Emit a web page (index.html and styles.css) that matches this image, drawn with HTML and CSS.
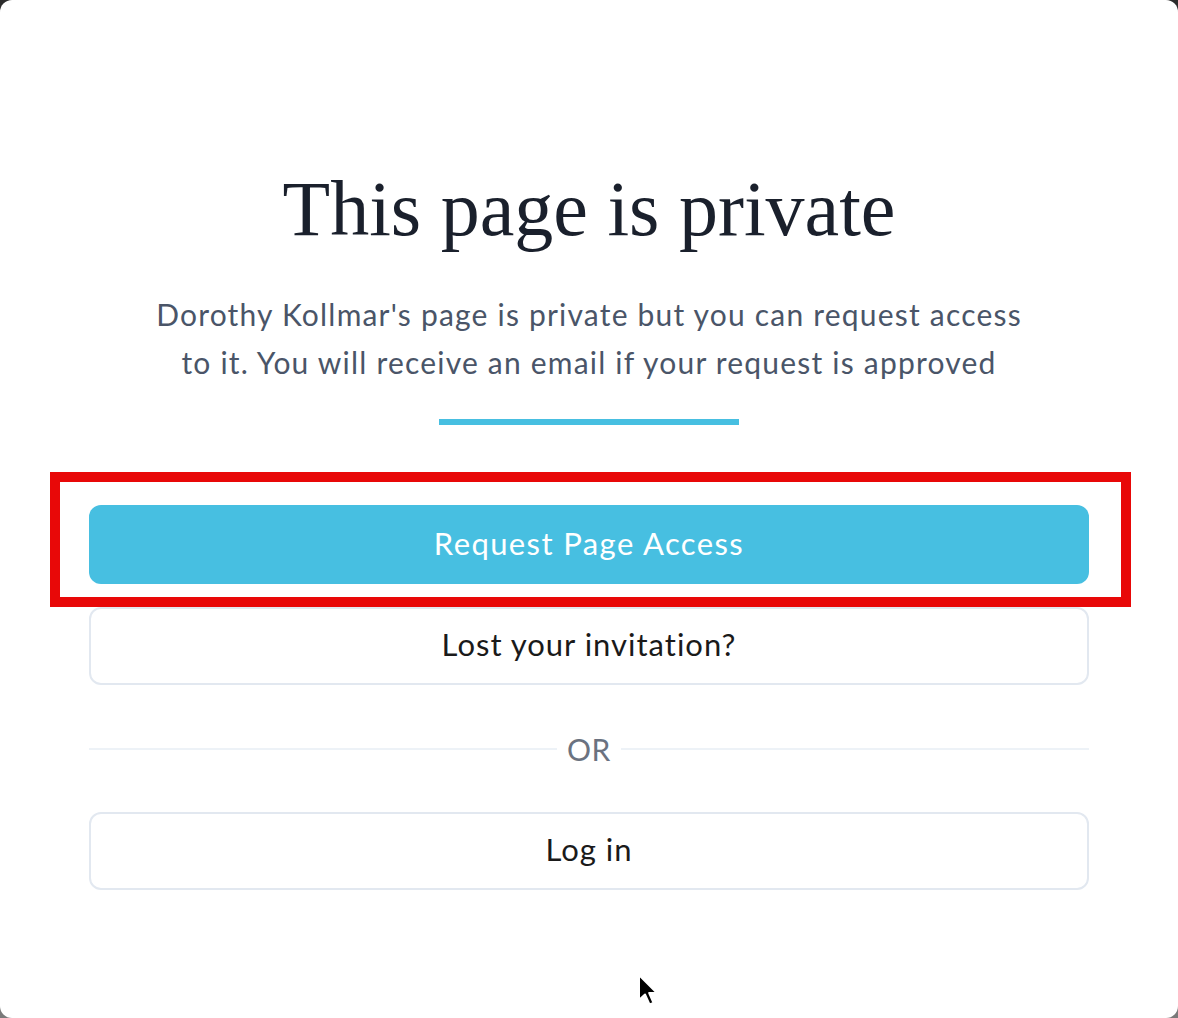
FILE: index.html
```html
<!DOCTYPE html>
<html lang="en">
<head>
<meta charset="utf-8">
<title>This page is private</title>
<link rel="stylesheet" href="styles.css">
</head>
<body>
<div class="card">
  <div class="content">
    <h1 class="title">This page is private</h1>
    <p class="lead">Dorothy Kollmar's page is private but you can request access to it. You will receive an email if your request is approved</p>
    <div class="accent"></div>
    <div class="actions">
      <div class="highlight-wrap">
        <button class="btn btn-primary">Request Page Access</button>
        <div class="highlight"></div>
      </div>
      <button class="btn btn-outline">Lost your invitation?</button>
      <div class="divider"><span class="divider-line"></span><span class="divider-text">OR</span><span class="divider-line"></span></div>
      <button class="btn btn-outline">Log in</button>
    </div>
  </div>
  <svg class="cursor" width="26" height="36" viewBox="0 0 26 36" aria-hidden="true">
    <path d="M3 2 L3 27 L9 21.5 L13.5 31.5 L17.5 29.8 L13.2 20 L21 20 Z" fill="#000" stroke="#fff" stroke-width="2" stroke-linejoin="round"/>
  </svg>
</div>
</body>
</html>
```
FILE: styles.css
```css
html, body {
  margin: 0;
  padding: 0;
  height: 100%;
}
body {
  background: linear-gradient(#2c2c2c, #7a7a7a);
  font-family: "Lato", "Noto Sans", sans-serif;
}
.card {
  position: relative;
  height: 1018px;
  background: #fff;
  border-radius: 12px;
  box-sizing: border-box;
  padding-top: 159px;
}
.content {
  width: 1000px;
  margin: 0 auto;
  display: flex;
  flex-direction: column;
  align-items: center;
}
.title {
  margin: 0;
  font-family: "Liberation Serif", "DejaVu Serif", serif;
  font-weight: normal;
  font-size: 78px;
  line-height: 100px;
  color: #1a202c;
}
.lead {
  margin: 31px 0 0;
  width: 890px;
  text-align: center;
  font-size: 30px;
  letter-spacing: 1.2px;
  line-height: 48px;
  color: #4a5568;
}
.accent {
  margin-top: 33px;
  width: 300px;
  height: 6px;
  background: #47bfe1;
}
.actions {
  margin-top: 80px;
  width: 1000px;
  display: flex;
  flex-direction: column;
}
.highlight-wrap {
  position: relative;
}
.highlight {
  position: absolute;
  left: -39px;
  right: -42px;
  top: -33px;
  bottom: -23px;
  border: 10px solid #e80808;
  pointer-events: none;
}
.btn {
  display: block;
  width: 100%;
  height: 79px;
  padding: 0 0 4px;
  border-radius: 12px;
  font-family: "Lato", "Noto Sans", sans-serif;
  font-size: 31px;
  letter-spacing: 1px;
  cursor: pointer;
  box-sizing: border-box;
}
.btn-primary {
  background: #47bfe1;
  color: #fff;
  border: none;
  letter-spacing: 1.4px;
}
.btn-outline {
  margin-top: 23px;
  background: #fff;
  color: #1a1a1a;
  border: 2px solid #e2e8f0;
  height: 78px;
}
.divider {
  margin-top: 49px;
  display: flex;
  align-items: center;
  gap: 10px;
}
.divider-line {
  flex: 1;
  height: 2px;
  background: #edf2f7;
}
.divider-text {
  font-size: 30px;
  letter-spacing: 0.5px;
  color: #6b7280;
  line-height: 30px;
}
.divider + .btn-outline {
  margin-top: 48px;
}
.cursor {
  position: absolute;
  left: 636px;
  top: 973px;
}
```
